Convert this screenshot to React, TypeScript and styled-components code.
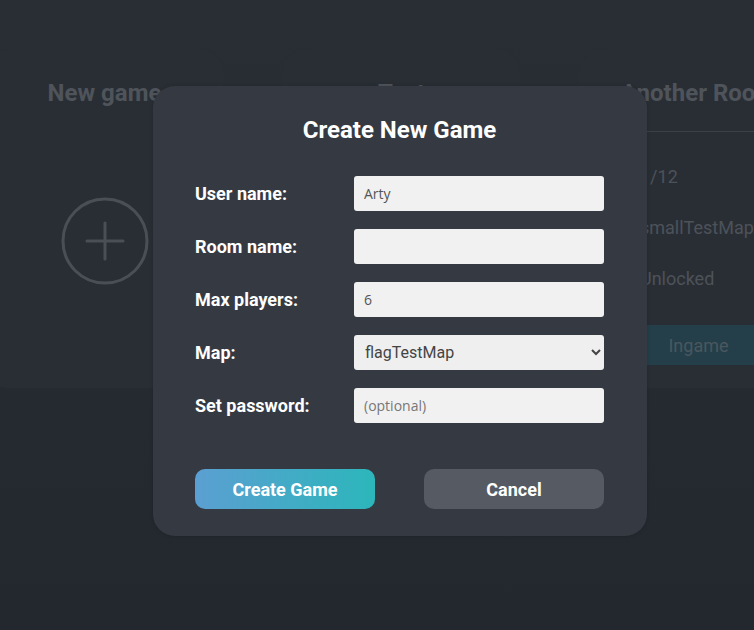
import React from "react";
import styled, { createGlobalStyle } from "styled-components";

const Global = createGlobalStyle`
  html, body { margin: 0; padding: 0; }
  body {
    width: 754px;
    height: 630px;
    overflow: hidden;
    background: linear-gradient(180deg, #292d34 0%, #262a31 50%, #23272e 100%);
    font-family: Roboto, "Liberation Sans", sans-serif;
  }
  * { box-sizing: border-box; }
`;

const Page = styled.div`
  position: relative;
  width: 754px;
  height: 630px;
  overflow: hidden;
`;

const CardRow = styled.div`
  display: flex;
  gap: 60px;
  padding-top: 50px;
  margin-left: -14px;
`;

const Card = styled.div`
  flex: 0 0 237px;
  height: 338px;
  border-radius: 22px;
  background: #292e35;
  display: flex;
  flex-direction: column;
  align-items: stretch;
`;

const CardTitle = styled.div<{ $line?: boolean }>`
  height: 82px;
  padding-top: 29px;
  line-height: 28px;
  text-align: center;
  font-size: 24px;
  font-weight: 700;
  color: #4f545b;
  white-space: nowrap;
  border-bottom: ${(p) => (p.$line ? "1px solid #3c4148" : "none")};
  margin: 0 ${(p) => (p.$line ? "40px" : "0")};
`;

const PlusWrap = styled.div`
  flex: 1;
  display: flex;
  justify-content: center;
  padding-top: 64px;
`;

const InfoList = styled.div`
  display: flex;
  flex-direction: column;
  padding: 33px 0 0 60px;
  gap: 27px;
`;

const Info = styled.div`
  font-size: 18px;
  color: #4d5259;
  line-height: 24px;
  white-space: nowrap;
`;

const IngameBtn = styled.div`
  margin-top: 34px;
  height: 40px;
  background: #243f4a;
  display: flex;
  align-items: center;
  justify-content: center;
  font-size: 18px;
  color: #4a575e;
`;

const Modal = styled.div`
  position: absolute;
  left: 153px;
  top: 86px;
  width: 494px;
  height: 450px;
  background: #353a42;
  border-radius: 22px;
  padding: 30px 43px 0 42px;
  display: flex;
  flex-direction: column;
  box-shadow: 0 0 4px rgba(0, 0, 0, 0.15);
`;

const Title = styled.h2`
  margin: 0;
  font-size: 24px;
  line-height: 28px;
  font-weight: 700;
  color: #ffffff;
  text-align: center;
`;

const Form = styled.div`
  display: grid;
  grid-template-columns: 159px 250px;
  row-gap: 18px;
  margin-top: 32px;
`;

const Label = styled.label`
  display: flex;
  align-items: center;
  height: 35px;
  font-size: 18px;
  font-weight: 700;
  color: #ffffff;
`;

const Input = styled.input`
  height: 35px;
  width: 250px;
  border: none;
  border-radius: 3px;
  background: #f1f1f1;
  padding: 0 10px;
  font-family: "Open Sans", "Liberation Sans", sans-serif;
  font-size: 14px;
  color: #555;
  outline: none;
  &::placeholder { color: #777; }
`;

const Select = styled.select`
  height: 35px;
  width: 250px;
  border: none;
  border-radius: 3px;
  background: #efefef;
  padding: 0 7px;
  font-family: Roboto, "Liberation Sans", sans-serif;
  font-size: 16px;
  color: #444;
  outline: none;
`;

const Buttons = styled.div`
  display: flex;
  justify-content: space-between;
  margin-top: 46px;
`;

const Button = styled.button<{ $primary?: boolean }>`
  width: 180px;
  height: 40px;
  border: none;
  border-radius: 10px;
  font-family: Roboto, "Liberation Sans", sans-serif;
  font-size: 18px;
  font-weight: 700;
  color: #ffffff;
  cursor: pointer;
  background: ${(p) =>
    p.$primary ? "linear-gradient(90deg, #5b9fd2 0%, #2cb6bb 100%)" : "#565a62"};
`;

export default function App() {
  return (
    <Page>
      <Global />
      <CardRow>
        <Card>
          <CardTitle>New game</CardTitle>
          <PlusWrap>
            <svg width="90" height="90" viewBox="0 0 90 90">
              <circle cx="45" cy="45" r="42" fill="none" stroke="#4a4f56" strokeWidth="3" />
              <line x1="27" y1="45" x2="63" y2="45" stroke="#4a4f56" strokeWidth="3" strokeLinecap="round" />
              <line x1="45" y1="27" x2="45" y2="63" stroke="#4a4f56" strokeWidth="3" strokeLinecap="round" />
            </svg>
          </PlusWrap>
        </Card>
        <Card>
          <CardTitle $line>Test</CardTitle>
          <InfoList>
            <Info>1/6</Info>
            <Info>flagTestMap</Info>
            <Info>Unlocked</Info>
          </InfoList>
          <IngameBtn>Join</IngameBtn>
        </Card>
        <Card>
          <CardTitle $line>Another Room</CardTitle>
          <InfoList>
            <Info>1/12</Info>
            <Info>smallTestMap</Info>
            <Info>Unlocked</Info>
          </InfoList>
          <IngameBtn>Ingame</IngameBtn>
        </Card>
      </CardRow>

      <Modal>
        <Title>Create New Game</Title>
        <Form>
          <Label>User name:</Label>
          <Input defaultValue="Arty" />
          <Label>Room name:</Label>
          <Input defaultValue="" />
          <Label>Max players:</Label>
          <Input defaultValue="6" />
          <Label>Map:</Label>
          <Select defaultValue="flagTestMap">
            <option>flagTestMap</option>
            <option>smallTestMap</option>
          </Select>
          <Label>Set password:</Label>
          <Input placeholder="(optional)" />
        </Form>
        <Buttons>
          <Button $primary>Create Game</Button>
          <Button>Cancel</Button>
        </Buttons>
      </Modal>
    </Page>
  );
}
